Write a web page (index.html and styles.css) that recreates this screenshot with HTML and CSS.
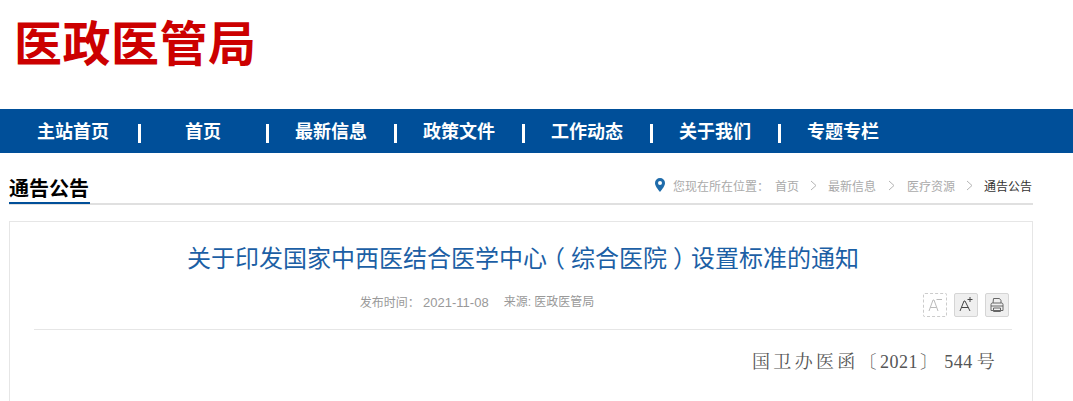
FILE: index.html
```html
<!DOCTYPE html>
<html lang="zh-CN">
<head>
    <meta charset="UTF-8">
    <title>医政医管局</title>
    <link rel="stylesheet" href="styles.css">
</head>
<body>
    <div class="logo">医政医管局</div>

    <ul class="nav">
        <li class="nav-item first">主站首页</li>
        <li class="nav-item">首页</li>
        <li class="nav-item">最新信息</li>
        <li class="nav-item">政策文件</li>
        <li class="nav-item">工作动态</li>
        <li class="nav-item">关于我们</li>
        <li class="nav-item last">专题专栏</li>
    </ul>

    <div class="main">
        <div class="crumb-bar">
            <h2 class="section-title">通告公告</h2>
            <div class="crumbs">
                <svg class="pin" width="10" height="14" viewBox="0 0 10 14">
                    <path fill="#1f6cab" fill-rule="evenodd" d="M5 0a5 5 0 0 1 5 5c0 3-3 6.500-5 9-2-2.500-5-6-5-9a5 5 0 0 1 5-5zm0 3a2 2 0 1 0 0 4 2 2 0 0 0 0-4z"/>
                </svg>
                <span class="here">您现在所在位置<span class="punct">：</span></span>
                <span>首页</span>
                <svg class="arrow" width="7" height="11" viewBox="0 0 7 11"><path d="M1 1l5 4.500-5 4.500" fill="none" stroke="#b5b5b5"/></svg>
                <span>最新信息</span>
                <svg class="arrow wide" width="7" height="11" viewBox="0 0 7 11"><path d="M1 1l5 4.500-5 4.500" fill="none" stroke="#b5b5b5"/></svg>
                <span>医疗资源</span>
                <svg class="arrow" width="7" height="11" viewBox="0 0 7 11"><path d="M1 1l5 4.500-5 4.500" fill="none" stroke="#b5b5b5"/></svg>
                <span class="current">通告公告</span>
            </div>
        </div>

        <div class="article">
            <h1 class="article-title">关于印发国家中西医结合医学中心<span class="paren">（</span>综合医院<span class="paren">）</span>设置标准的通知</h1>
            <div class="meta-row">
                <div class="meta">
                    <span>发布时间<span class="punct">：</span> <span class="date">2021-11-08</span></span>
                    <span>来源: 医政医管局</span>
                </div>
                <div class="tools">
                    <div class="tool disabled">
                        <svg width="22" height="22" viewBox="0 0 22 22"><path d="M5 17L9 6h1l4 11M6.300 13.500h6.400M12.500 5.500h5.500" fill="none" stroke="#bbb"/></svg>
                    </div>
                    <div class="tool">
                        <svg width="22" height="22" viewBox="0 0 22 22"><path d="M5 17l4-10h1l5 10M6.500 13.500h7M12.500 5.500h5M15 3v5" fill="none" stroke="#444"/></svg>
                    </div>
                    <div class="tool">
                        <svg width="22" height="22" viewBox="0 0 22 22"><path d="M7 9l.5-4.500h6l1.500 2V9M5 16.500V10.500A1.500 1.500 0 0 1 6.500 9h9a1.500 1.500 0 0 1 1.500 1.500v6zM7.500 14h7v3.500h-7zM5 12h12" fill="none" stroke="#666"/></svg>
                    </div>
                </div>
            </div>
            <p class="doc-no">国卫办医函〔<span class="num year">2021</span>〕<span class="num serial">544</span>号</p>
        </div>
    </div>
</body>
</html>
```

FILE: styles.css
```css
/* Basic styling */
html, body {
    height: 401px;
    overflow: hidden;
}
body {
    margin: 0;
    background-color: #fff;
    font-family: "Liberation Sans", "Noto Sans CJK SC", sans-serif;
}
/* Full-width punctuation sits centred in its cell on the original page */
.punct {
    font-family: "Noto Sans CJK TC", sans-serif;
}
.paren {
    padding: 0 6px;
    font-feature-settings: "halt";
}

/* Header */
.logo {
    height: 109px;
    padding: 15px 0 0 14px;
    box-sizing: border-box;
    font-size: 48px;
    line-height: 60px;
    font-weight: bold;
    letter-spacing: 0.500px;
    color: #cc0000;
}

/* Nav */
.nav {
    display: flex;
    height: 44px;
    margin: 0;
    padding: 0 0 0 9px;
    list-style: none;
    background-color: #004f99;
}
.nav-item {
    position: relative;
    width: 128px;
    text-align: center;
    font-size: 18px;
    line-height: 47px;
    font-weight: bold;
    color: #fff;
}
.nav-item.first {
    width: 130px;
    padding-right: 2px;
    box-sizing: border-box;
}
/* Separator between menu items */
.nav-item::after {
    content: "";
    position: absolute;
    right: -2px;
    top: 15px;
    width: 3px;
    height: 19px;
    background-color: #fff;
}
.nav-item.last::after {
    display: none;
}

/* Breadcrumb row */
.main {
    width: 1024px;
    margin-left: 9px;
}
.crumb-bar {
    display: flex;
    justify-content: space-between;
    align-items: flex-end;
    height: 50px;
    border-bottom: 2px solid #e0e0e0;
}
.section-title {
    margin: 0 0 -1px;
    height: 28px;
    padding-right: 1px;
    font-size: 20px;
    line-height: 31px;
    font-weight: bold;
    color: #000;
    border-bottom: 2px solid #004f99;
}
.crumbs {
    display: flex;
    align-items: center;
    height: 24px;
    margin-bottom: 6px;
    padding-right: 1px;
    font-size: 12px;
    color: #aaa;
}
.pin {
    margin-right: 8px;
}
.here {
    margin-right: 6px;
}
.arrow {
    margin: 0 11px;
}
.arrow.wide {
    margin: 0 12px;
}
.current {
    color: #333;
}

/* Article */
.article {
    margin-top: 16px;
    height: 179px;
    padding: 0 20px 0 24px;
    border: 1px solid #e6e6e6;
    border-bottom: none;
}
.article-title {
    margin: 0;
    padding-top: 22px;
    text-align: center;
    font-size: 24px;
    line-height: 30px;
    font-weight: normal;
    color: #1c5fa5;
}
.meta-row {
    position: relative;
    height: 36px;
    margin-top: 19px;
    border-bottom: 1px solid #e6e6e6;
}
.meta {
    display: flex;
    justify-content: center;
    gap: 15px;
    padding-right: 92px;
    font-size: 12px;
    line-height: 18px;
    color: #999;
}
.date {
    font-size: 13px;
}
.tools {
    position: absolute;
    right: 3px;
    top: 0;
    display: flex;
    gap: 7px;
}
.tool {
    display: flex;
    align-items: center;
    justify-content: center;
    width: 22px;
    height: 22px;
    border: 1px solid #d5d5d5;
    border-radius: 2px;
    background-color: #efefef;
}
.tool.disabled {
    border: 1px dashed #ccc;
    background-color: #fff;
}
.doc-no {
    margin: 20px 14px 0 0;
    text-align: right;
    font-family: "Liberation Serif", "Noto Serif CJK SC", "Noto Sans CJK SC", serif;
    font-size: 18px;
    line-height: 24px;
    letter-spacing: 3.300px;
    color: #555;
}
.num {
    letter-spacing: 0.500px;
}
.year {
    margin: 0 2px 0 0;
}
.serial {
    margin: 0 4px 0 3px;
}
```
